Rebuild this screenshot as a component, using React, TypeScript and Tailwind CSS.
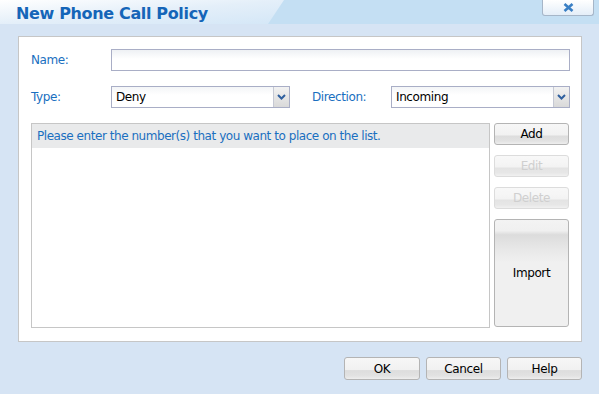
import React from 'react';

const font = { fontFamily: '"DejaVu Sans", Verdana, sans-serif' };

function Btn({ label, disabled, className = '' }: { label: string; disabled?: boolean; className?: string }) {
  return (
    <div
      className={`flex items-center justify-center rounded-[3px] border border-[#b4b4b4] bg-[linear-gradient(to_bottom,#f7f7f7_0%,#f1f1f1_55%,#dddddd_60%,#e2e2e2_85%,#eeeeee_100%)] text-[12px] tracking-[-0.4px] ${
        disabled ? 'text-[#c4c4c4] border-[#d4d4d4] opacity-80' : 'text-black'
      } ${className}`}
    >
      {label}
    </div>
  );
}

function Select({ value, className = '' }: { value: string; className?: string }) {
  return (
    <div className={`flex h-[22px] border border-[#a9aec6] bg-[linear-gradient(to_bottom,#f3f5f7,#ffffff_40%)] ${className}`}>
      <div className="flex-1 pl-[4px] text-[12px] leading-[20px] tracking-[-0.4px] text-black">{value}</div>
      <div className="flex w-[16px] items-center justify-center border-l border-[#c6c9d4] bg-[linear-gradient(to_bottom,#f2f2f2,#d9d9d9)]">
        <svg width="9" height="6" viewBox="0 0 9 6">
          <path d="M1 1 L4.5 4.5 L8 1" fill="none" stroke="#2f5f9e" strokeWidth="2" />
        </svg>
      </div>
    </div>
  );
}

export default function App() {
  return (
    <div className="flex h-[394px] w-[599px] flex-col overflow-hidden bg-[#d6e4f4]" style={font}>
      {/* title bar */}
      <div className="relative flex h-[24px] shrink-0 items-start bg-[#c4dff3]">
        <div className="absolute inset-y-0 left-0 w-[284px] bg-[linear-gradient(to_bottom_right,#ffffff,#e4eff9_50%,#d4e7f7)] [clip-path:polygon(0_0,284px_0,268px_100%,0_100%)]" />
        <h1 className="relative ml-[16px] mt-[4px] text-[16px] font-bold leading-[20px] tracking-[-0.35px] text-[#1565b8]">
          New Phone Call Policy
        </h1>
        <div className="relative ml-auto mr-[5px] flex h-[16px] w-[52px] items-center justify-center rounded-b-[3px] border border-t-0 border-[#a6b6c8] bg-[linear-gradient(to_bottom,#ffffff,#e4eef8)]">
          <svg width="11" height="9" viewBox="0 0 11 9">
            <path d="M1.5 1 L9.5 8 M9.5 1 L1.5 8" stroke="#3a7fc4" strokeWidth="2.6" />
          </svg>
        </div>
      </div>

      {/* panel */}
      <div className="ml-[18px] mt-[12px] flex h-[306px] w-[564px] flex-col border border-[#c6c6c6] bg-white pl-[12px] pr-[11px] pt-[12px]">
        <div className="flex h-[22px] items-center">
          <div className="w-[80px] text-[12px] tracking-[-0.4px] text-[#1a6fc0]">Name:</div>
          <div className="h-[22px] flex-1 border border-[#a9aec6] bg-[linear-gradient(to_bottom,#eef1f4,#ffffff_45%)]" />
        </div>

        <div className="mt-[15px] flex h-[22px] items-center">
          <div className="w-[80px] text-[12px] tracking-[-0.4px] text-[#1a6fc0]">Type:</div>
          <Select value="Deny" className="w-[179px]" />
          <div className="ml-[22px] w-[79px] text-[12px] tracking-[-0.4px] text-[#1a6fc0]">Direction:</div>
          <Select value="Incoming" className="flex-1" />
        </div>

        <div className="mt-[15px] flex gap-[4px]">
          <div className="flex h-[205px] w-[459px] flex-col border border-[#c6c6c6]">
            <div className="h-[24px] bg-[#e9eaeb] pl-[5px] text-[12px] leading-[24px] tracking-[-0.45px] text-[#1a6fc0]">
              Please enter the number(s) that you want to place on the list.
            </div>
          </div>
          <div className="flex w-[75px] flex-col gap-[10px]">
            <Btn label="Add" className="h-[22px]" />
            <Btn label="Edit" disabled className="h-[22px]" />
            <Btn label="Delete" disabled className="h-[22px]" />
            <div className="flex h-[108px] items-center justify-center rounded-[3px] border border-[#b4b4b4] bg-[linear-gradient(to_bottom,#f3f3f3_0%,#f0f0f0_10%,#dcdcdc_14%,#e8e8e8_28%,#f0f0f0_40%,#f0f0f0_100%)] text-[12px] tracking-[-0.4px] text-black">
              Import
            </div>
          </div>
        </div>
      </div>

      {/* footer */}
      <div className="mr-[17px] mt-[15px] flex justify-end gap-[6px]">
        <Btn label="OK" className="h-[23px] w-[76px]" />
        <Btn label="Cancel" className="h-[23px] w-[75px]" />
        <Btn label="Help" className="h-[23px] w-[75px]" />
      </div>
    </div>
  );
}
